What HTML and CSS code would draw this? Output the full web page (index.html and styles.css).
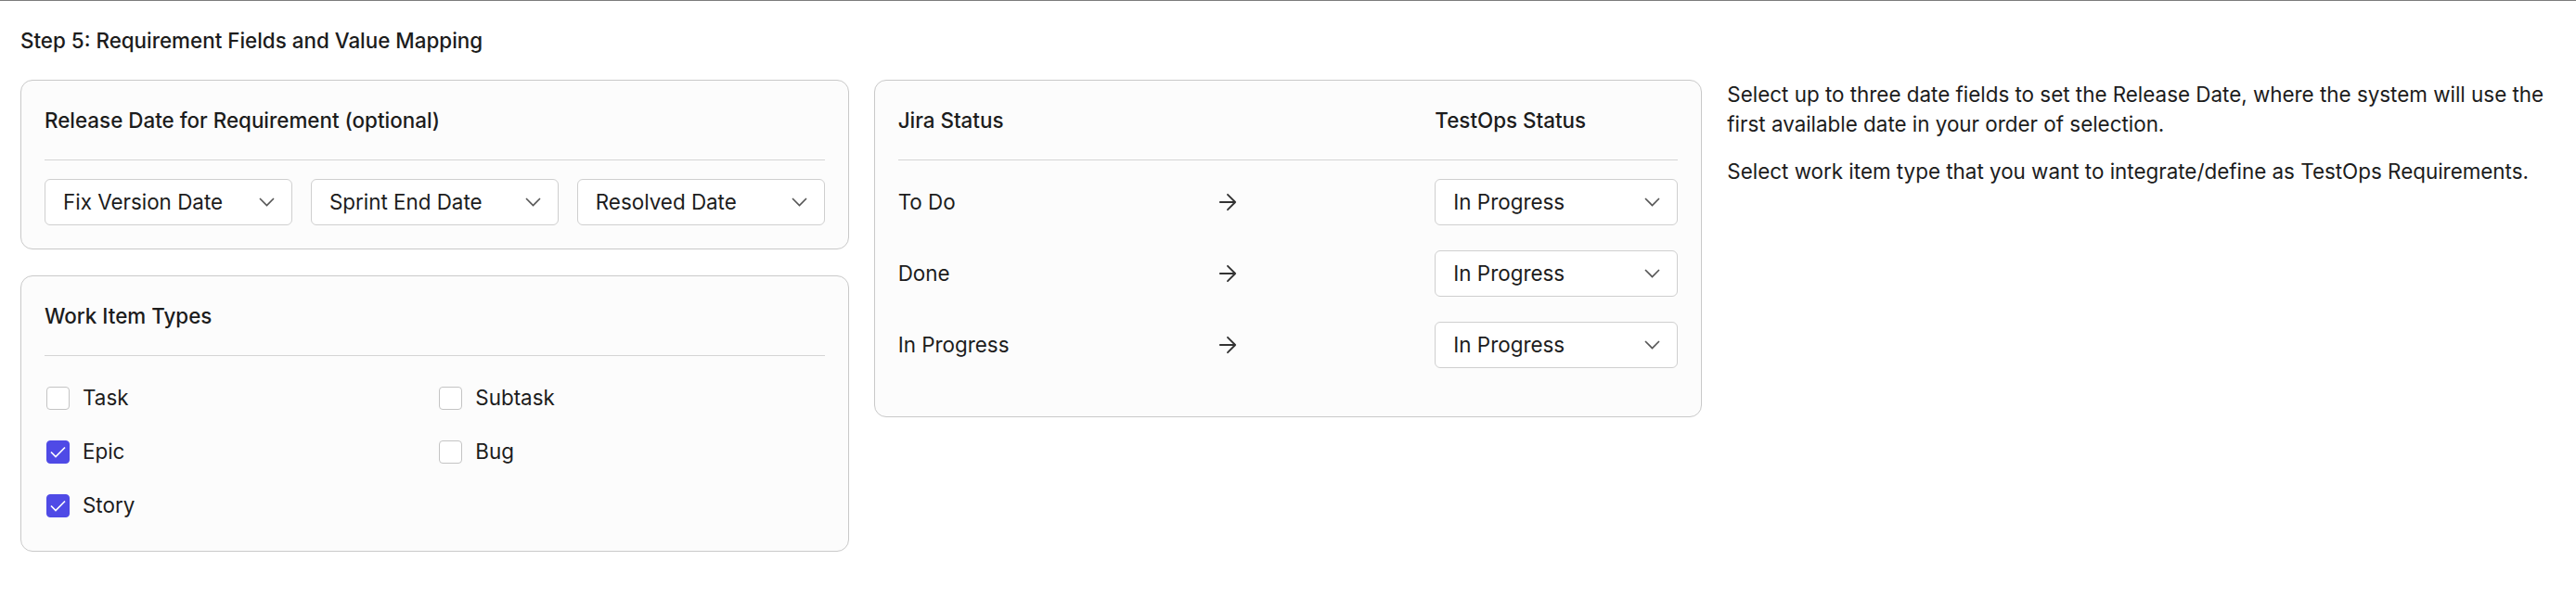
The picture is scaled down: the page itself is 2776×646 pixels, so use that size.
FILE: index.html
```html
<!DOCTYPE html>
<html lang="en">
<head>
    <meta charset="UTF-8">
    <title>Step 5: Requirement Fields and Value Mapping</title>
    <link rel="stylesheet" href="styles.css">
</head>
<body>

    <div class="page">
        <h2 class="step-title">Step 5: Requirement Fields and Value Mapping</h2>

        <div class="step-grid">
            <div class="left-col">
                <div class="card">
                    <div class="card-header">Release Date for Requirement (optional)</div>
                    <div class="date-selects">
                        <div class="select"><span>Fix Version Date</span><svg class="chevron" width="17" height="10" viewBox="0 0 17 10"><polyline points="1,1 8.5,8.5 16,1"/></svg></div>
                        <div class="select"><span>Sprint End Date</span><svg class="chevron" width="17" height="10" viewBox="0 0 17 10"><polyline points="1,1 8.5,8.5 16,1"/></svg></div>
                        <div class="select"><span>Resolved Date</span><svg class="chevron" width="17" height="10" viewBox="0 0 17 10"><polyline points="1,1 8.5,8.5 16,1"/></svg></div>
                    </div>
                </div>

                <div class="card">
                    <div class="card-header">Work Item Types</div>
                    <div class="type-list">
                        <label class="check-row"><span class="box"></span>Task</label>
                        <label class="check-row"><span class="box"></span>Subtask</label>
                        <label class="check-row"><span class="box checked"><svg width="19" height="15" viewBox="0 0 19 15"><polyline points="2,7.5 7,12.5 17,2.5"/></svg></span>Epic</label>
                        <label class="check-row"><span class="box"></span>Bug</label>
                        <label class="check-row"><span class="box checked"><svg width="19" height="15" viewBox="0 0 19 15"><polyline points="2,7.5 7,12.5 17,2.5"/></svg></span>Story</label>
                    </div>
                </div>
            </div>

            <div class="card status-card">
                <div class="card-header status-grid">
                    <span>Jira Status</span>
                    <span></span>
                    <span>TestOps Status</span>
                </div>
                <div class="status-rows">
                    <div class="status-grid">
                        <span>To Do</span>
                        <svg class="arrow" width="28" height="28" viewBox="0 0 24 24"><path d="M5 12h14M12 5l7 7-7 7"/></svg>
                        <div class="select"><span>In Progress</span><svg class="chevron" width="17" height="10" viewBox="0 0 17 10"><polyline points="1,1 8.5,8.5 16,1"/></svg></div>
                    </div>
                    <div class="status-grid">
                        <span>Done</span>
                        <svg class="arrow" width="28" height="28" viewBox="0 0 24 24"><path d="M5 12h14M12 5l7 7-7 7"/></svg>
                        <div class="select"><span>In Progress</span><svg class="chevron" width="17" height="10" viewBox="0 0 17 10"><polyline points="1,1 8.5,8.5 16,1"/></svg></div>
                    </div>
                    <div class="status-grid">
                        <span>In Progress</span>
                        <svg class="arrow" width="28" height="28" viewBox="0 0 24 24"><path d="M5 12h14M12 5l7 7-7 7"/></svg>
                        <div class="select"><span>In Progress</span><svg class="chevron" width="17" height="10" viewBox="0 0 17 10"><polyline points="1,1 8.5,8.5 16,1"/></svg></div>
                    </div>
                </div>
            </div>

            <div class="help-text">
                <p>Select up to three date fields to set the Release Date, where the system will use the first available date in your order of selection.</p>
                <p>Select work item type that you want to integrate/define as TestOps Requirements.</p>
            </div>
        </div>
    </div>

</body>
</html>
```

FILE: styles.css
```css
body {
    margin: 0;
    background-color: #fff;
    color: #1c1c1c;
    font-family: Inter, 'Noto Sans', sans-serif;
    font-size: 22.4px;
    line-height: 32px;
}

.page {
    border-top: 1px solid #7c7c7c;
    padding: 27px 22px;
}

.step-title {
    margin: 0 0 26px 0;
    font-size: 22.4px;
    font-weight: 500;
    line-height: 32px;
}

.step-grid {
    display: grid;
    grid-template-columns: 1fr 1fr 1fr;
    column-gap: 27px;
    align-items: start;
}

.left-col {
    display: flex;
    flex-direction: column;
    gap: 28px;
}

.card {
    background-color: #fcfcfc;
    border: 1px solid #c9c9c9;
    border-radius: 13px;
    padding: 25px;
}

.card-header {
    font-weight: 500;
    line-height: 36px;
    padding-bottom: 24px;
    border-bottom: 1px solid #d4d4d4;
}

.date-selects {
    display: grid;
    grid-template-columns: 1fr 1fr 1fr;
    gap: 20px;
    margin-top: 20px;
}

.select {
    display: flex;
    align-items: center;
    justify-content: space-between;
    height: 50px;
    box-sizing: border-box;
    padding: 0 18px 0 19px;
    background-color: #fff;
    border: 1px solid #cfcfcf;
    border-radius: 6px;
}

.chevron {
    fill: none;
    stroke: #555;
    stroke-width: 1.6;
}

.type-list {
    display: grid;
    grid-template-columns: 1fr 1fr;
    column-gap: 6px;
    row-gap: 14px;
    margin-top: 23px;
    padding-bottom: 2px;
}

.check-row {
    display: flex;
    align-items: center;
    height: 44px;
    padding-left: 2px;
}

.box {
    width: 25px;
    height: 25px;
    box-sizing: border-box;
    border: 1px solid #c4c4c4;
    border-radius: 4px;
    background-color: #fff;
    margin-right: 14px;
    display: flex;
    align-items: center;
    justify-content: center;
}

.box.checked {
    background-color: #4f4ae6;
    border-color: #4f4ae6;
}

.box svg {
    fill: none;
    stroke: #fff;
    stroke-width: 1.7;
}

.status-grid {
    display: grid;
    grid-template-columns: 341px 1fr 262px;
    align-items: center;
}

.status-rows {
    display: flex;
    flex-direction: column;
    gap: 27px;
    margin-top: 20px;
    padding-bottom: 27px;
}

.status-rows .status-grid {
    height: 50px;
}

.arrow {
    fill: none;
    stroke: #333;
    stroke-width: 1.6;
    stroke-linecap: round;
    stroke-linejoin: round;
}

.help-text p {
    margin: 0 0 19px 0;
}
```
